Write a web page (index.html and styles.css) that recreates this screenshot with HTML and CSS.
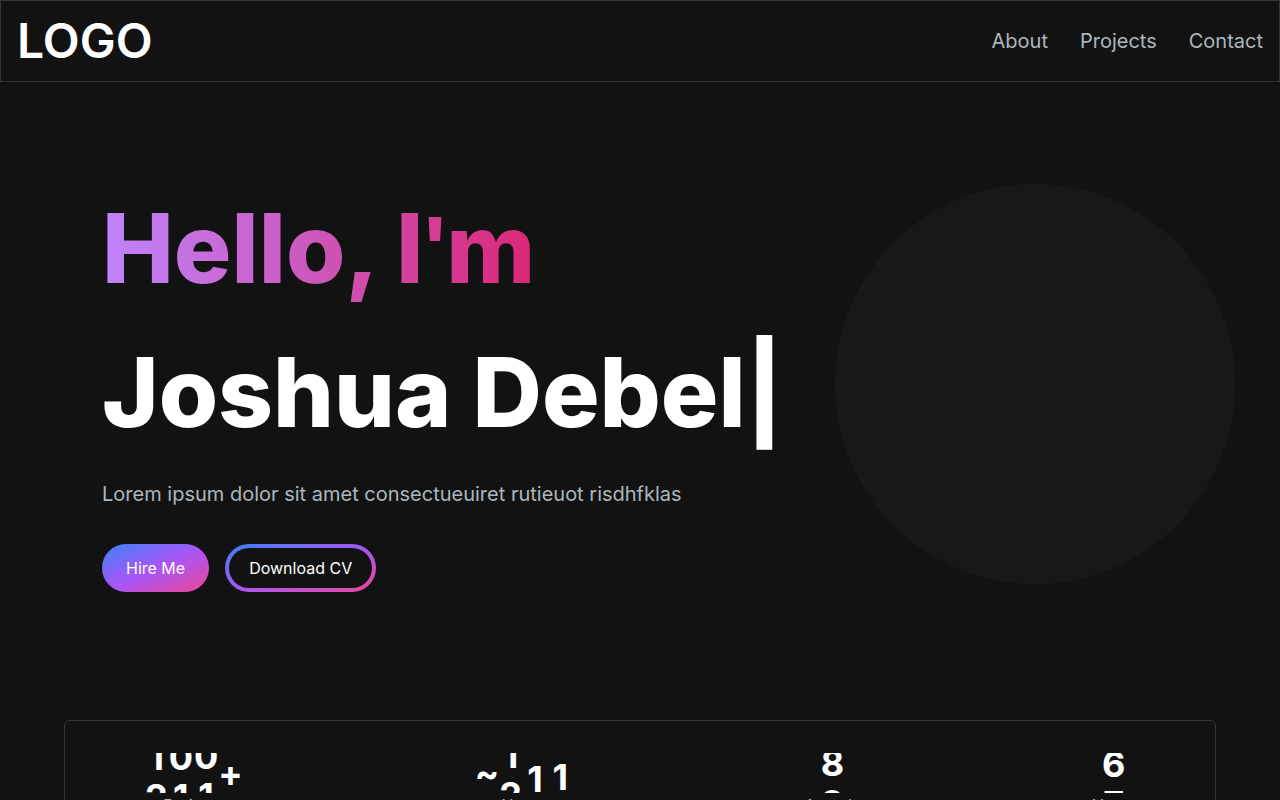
FILE: index.html
```html
<!DOCTYPE html>
<html lang="en">
<head>
<meta charset="utf-8">
<meta name="viewport" content="width=device-width, initial-scale=1">
<title>Portfolio</title>
<link rel="stylesheet" href="styles.css">
</head>
<body>
<header class="navbar">
  <a class="logo" href="#">LOGO</a>
  <nav class="nav-links">
    <a href="#about">About</a>
    <a href="#projects">Projects</a>
    <a href="#contact">Contact</a>
  </nav>
</header>
<main class="page">
  <section class="hero">
    <div class="intro">
      <h1 class="title"><span class="greeting">Hello, I<span class="apostrophe">'</span>m </span><br><span>Joshua Debel</span><span class="cursor">|</span></h1>
      <p class="lead">Lorem ipsum dolor sit amet consectueuiret rutieuot risdhfklas</p>
      <div class="actions">
        <button class="btn" type="button">Hire Me</button>
        <button class="btn btn-outline" type="button"><span class="btn-inner">Download CV</span></button>
      </div>
    </div>
    <div class="portrait"></div>
  </section>
  <section class="stats">
    <div class="stat">
      <div class="stat-value">
        <span class="counter">
          <span class="reel shift-a"><span>1</span><span>2</span></span>
          <span class="reel shift-a"><span>0</span><span>1</span></span>
          <span class="reel shift-b"><span>0</span><span>1</span></span>
        </span>
        <span>+</span>
      </div>
      <p class="stat-label">Projects</p>
    </div>
    <div class="stat">
      <div class="stat-value">
        <span>~</span>
        <span class="counter">
          <span class="reel shift-c"><span>1</span><span>2</span></span>
          <span class="reel shift-d"><span>0</span><span>1</span></span>
          <span class="reel shift-e"><span>0</span><span>1</span></span>
        </span>
      </div>
      <p class="stat-label">Users</p>
    </div>
    <div class="stat">
      <div class="stat-value">
        <span class="counter"><span class="reel shift-f"><span>8</span><span>9</span></span></span>
      </div>
      <p class="stat-label">Awards</p>
    </div>
    <div class="stat">
      <div class="stat-value">
        <span class="counter"><span class="reel shift-g"><span>6</span><span>7</span></span></span>
      </div>
      <p class="stat-label">Years</p>
    </div>
  </section>
</main>
</body>
</html>
```
FILE: styles.css
```css
* { box-sizing: border-box; }
html { overflow: hidden; }
body {
  margin: 0;
  background: #121212;
  color: #fff;
  font: 16px/24px Inter, sans-serif;
}
h1, p { margin: 0; }
a { color: inherit; text-decoration: none; }

.navbar {
  display: flex;
  align-items: center;
  justify-content: space-between;
  padding: 16px;
  border: 1px solid #33353f;
}
.logo { font-size: 48px; line-height: 48px; font-weight: 600; }
.nav-links { display: flex; gap: 32px; font-size: 20px; line-height: 28px; color: #adb7be; }

.page { padding: 94px 64px 0; }
.hero {
  display: flex;
  justify-content: space-between;
  padding: 0 0 128px 38px;
}
.title { font-size: 96px; line-height: 144px; font-weight: 800; white-space: nowrap; }
.greeting {
  background: linear-gradient(to right, #c084fc, #db2777);
  -webkit-background-clip: text;
  background-clip: text;
  color: transparent;
}
.apostrophe { font-family: "Liberation Sans", Arial, sans-serif; line-height: 1; }
.lead { margin: 16px 0 36px; font-size: 20px; line-height: 28px; color: #adb7be; }
.actions { display: flex; gap: 16px; }
.btn {
  padding: 12px 24px;
  border: 0;
  border-radius: 24px;
  background: linear-gradient(to bottom right, #3b82f6, #a855f7, #ec4899);
  color: #fff;
  font: inherit;
}
.btn-outline { padding: 4px; }
.btn-inner { display: block; padding: 8px 20px; border-radius: 20px; background: #121212; }
.portrait {
  flex: none;
  width: 400px;
  height: 400px;
  margin: 8px -19px 0 0;
  border-radius: 50%;
  background: #181818;
}

.stats {
  display: flex;
  justify-content: space-between;
  padding: 32px 64px;
  border: 1px solid #33353f;
  border-radius: 6px;
}
.stat { display: flex; flex-direction: column; align-items: center; margin: 0 16px; }
.stat-value { display: flex; font-size: 36px; line-height: 40px; font-weight: 700; }
.counter { display: flex; gap: 1px; height: 40px; overflow: hidden; }
.reel { display: flex; flex-direction: column; align-items: center; }
.shift-a { transform: translateY(-16px); }
.shift-b { transform: translateY(-17px); }
.shift-c { transform: translateY(-18px); }
.shift-d { transform: translateY(-34px); }
.shift-e { transform: translateY(-36px); }
.shift-f { transform: translateY(-10px); }
.shift-g { transform: translateY(-9px); }
.stat-label { color: #adb7be; }
```
